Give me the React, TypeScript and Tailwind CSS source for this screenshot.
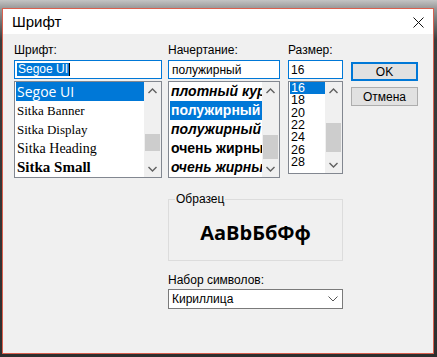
import React from "react";

const UI = "font-['Liberation_Sans',Arial,sans-serif]";

function Chevron({ up }: { up?: boolean }) {
  return (
    <svg width="9" height="6" viewBox="0 0 9 6" className="block">
      <path
        d={up ? "M0.5 5 L4.5 1 L8.5 5" : "M0.5 1 L4.5 5 L8.5 1"}
        fill="none"
        stroke="#606060"
        strokeWidth="1.4"
      />
    </svg>
  );
}

function ScrollBar({ thumbTop, thumbH }: { thumbTop: number; thumbH: number }) {
  return (
    <div className="flex w-[17px] shrink-0 flex-col bg-[#f0f0f0]">
      <div className="flex h-[17px] items-center justify-center">
        <Chevron up />
      </div>
      <div className="flex-1">
        <div className="mx-[1px] bg-[#cdcdcd]" style={{ marginTop: thumbTop, height: thumbH }} />
      </div>
      <div className="flex h-[17px] items-center justify-center">
        <Chevron />
      </div>
    </div>
  );
}

const fonts: [string, string][] = [
  ["Segoe UI", "font-['Open_Sans',sans-serif] text-[14px]"],
  ["Sitka Banner", "font-['Liberation_Serif',serif] text-[13px]"],
  ["Sitka Display", "font-['Liberation_Serif',serif] text-[13px]"],
  ["Sitka Heading", "font-['Liberation_Serif',serif] text-[14px]"],
  ["Sitka Small", "font-['Liberation_Serif',serif] text-[15px] font-semibold"],
];

const styles: [string, string][] = [
  ["плотный курсив", "font-semibold italic"],
  ["полужирный", "font-bold"],
  ["полужирный курсив", "font-bold italic"],
  ["очень жирный", "font-black"],
  ["очень жирный курсив", "font-black italic"],
];

const sizes = ["16", "18", "20", "22", "24", "26", "28"];

export default function App() {
  return (
    <div className="h-[357px] w-[437px] overflow-hidden bg-[linear-gradient(180deg,#c4c4c4_0px,#9a9a9a_8px,#3c3c3c_40px,#2e2e2e_100%)] pl-[2px] pt-[8px]">
      <div className={`flex h-[346px] w-[432px] flex-col border border-[#d9604f] bg-[#f0f0f0] ${UI}`}>
        {/* title bar */}
        <div className="flex h-[25px] shrink-0 items-center justify-between bg-white pl-[9px] pr-[8px]">
          <span className="text-[15px] leading-none text-black">Шрифт</span>
          <svg width="11" height="11" viewBox="0 0 11 11" className="mr-[1px] mt-[1px]">
            <path d="M0.5 0.5 L10.5 10.5 M10.5 0.5 L0.5 10.5" stroke="#111" strokeWidth="1" />
          </svg>
        </div>

        <div className="flex flex-col pl-[11px] pt-[9px] text-[12px] text-black">
          <div className="flex items-start">
            {/* font name */}
            <div className="flex w-[148px] flex-col">
              <div className="h-[14px] leading-[14px]">Шрифт:</div>
              <div className="mt-[3px] flex h-[19px] items-center border border-[#0078d7] bg-white pl-[2px]">
                <span className="bg-[#0078d7] px-[1px] leading-[13px] text-white">Segoe UI</span>
                <span className="h-[13px] w-[1px] bg-black" />
              </div>
              <div className="mt-[2px] flex h-[97px] border border-[#828790] bg-white">
                <div className="flex-1 overflow-hidden pl-[1px]">
                  {fonts.map(([name, cls], i) => (
                    <div
                      key={name}
                      className={`flex h-[19px] items-center whitespace-nowrap pl-[1px] ${cls} ${
                        i === 0 ? "bg-[#0078d7] text-white" : "text-black"
                      }`}
                    >
                      {name}
                    </div>
                  ))}
                </div>
                <ScrollBar thumbTop={35} thumbH={17} />
              </div>
            </div>

            {/* style */}
            <div className="ml-[6px] flex w-[112px] flex-col">
              <div className="h-[14px] leading-[14px]">Начертание:</div>
              <div className="mt-[3px] flex h-[19px] items-center border border-[#0078d7] bg-white pl-[3px]">
                полужирный
              </div>
              <div className="mt-[2px] flex h-[97px] border border-[#828790] bg-white">
                <div className="flex-1 overflow-hidden pl-[1px]">
                  {styles.map(([name, cls], i) => (
                    <div
                      key={name}
                      className={`flex h-[19px] items-center overflow-hidden whitespace-nowrap pl-[1px] text-[14px] ${cls} ${
                        i === 1 ? "bg-[#0078d7] text-white" : "text-black"
                      }`}
                    >
                      {name}
                    </div>
                  ))}
                </div>
                <ScrollBar thumbTop={36} thumbH={24} />
              </div>
            </div>

            {/* size */}
            <div className="ml-[8px] flex w-[55px] flex-col">
              <div className="h-[14px] leading-[14px]">Размер:</div>
              <div className="mt-[3px] flex h-[19px] items-center border border-[#0078d7] bg-white pl-[2px]">
                16
              </div>
              <div className="mt-[2px] flex h-[93px] border border-[#828790] bg-white">
                <div className="flex-1 overflow-hidden pl-[1px]">
                  {sizes.map((s, i) => (
                    <div
                      key={s}
                      className={`h-[12.33px] pl-[1px] text-[12.5px] leading-[12.33px] ${
                        i === 0 ? "bg-[#0078d7] text-white" : "text-black"
                      }`}
                    >
                      {s}
                    </div>
                  ))}
                </div>
                <ScrollBar thumbTop={24} thumbH={29} />
              </div>
            </div>

            {/* buttons */}
            <div className="ml-[8px] flex w-[67px] flex-col">
              <button className="mt-[19px] flex h-[19px] items-center justify-center border-2 border-[#0078d7] bg-[#e1e1e1] text-[12px]">
                OK
              </button>
              <button className="mt-[6px] flex h-[19px] items-center justify-center border border-[#adadad] bg-[#e1e1e1] text-[12px]">
                Отмена
              </button>
            </div>
          </div>

          <div className="ml-[154px] flex w-[175px] flex-col">
            <fieldset className="mt-[14px] h-[69px] border border-[#dcdcdc] px-[6px]">
              <legend className="px-[1px] leading-[14px]">Образец</legend>
              <div className="flex h-[54px] items-center justify-center font-['Open_Sans',sans-serif] text-[20px] font-bold">
                AaBbБбФф
              </div>
            </fieldset>
            <div className="mt-[12px] h-[14px] leading-[14px]">Набор символов:</div>
            <div className="mt-[2px] flex h-[20px] items-center justify-between border border-[#7a7a7a] bg-white pl-[3px] pr-[4px]">
              <span>Кириллица</span>
              <svg width="10" height="6" viewBox="0 0 10 6">
                <path d="M0.5 0.5 L5 5 L9.5 0.5" fill="none" stroke="#555" strokeWidth="1" />
              </svg>
            </div>
          </div>
        </div>
      </div>
    </div>
  );
}
